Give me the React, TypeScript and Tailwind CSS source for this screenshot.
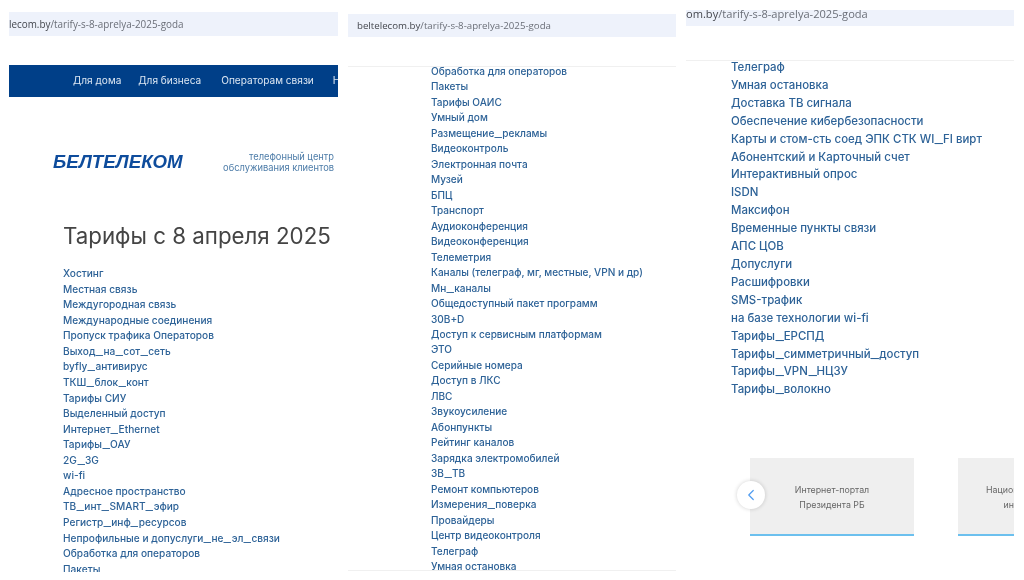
import React from 'react';
import { ChevronLeft } from 'lucide-react';

const firstList = [
  'Хостинг', 'Местная связь', 'Междугородная связь', 'Международные соединения', 'Пропуск трафика Операторов',
  'Выход_на_сот_сеть', 'byfly_антивирус', 'ТКШ_блок_конт', 'Тарифы СИУ', 'Выделенный доступ', 'Интернет_Ethernet',
  'Тарифы_ОАУ', '2G_3G', 'wi-fi', 'Адресное пространство', 'ТВ_инт_SMART_эфир', 'Регистр_инф_ресурсов',
  'Непрофильные и допуслуги_не_эл_связи', 'Обработка для операторов', 'Пакеты',
];

const secondList = [
  'Обработка для операторов', 'Пакеты', 'Тарифы ОАИС', 'Умный дом', 'Размещение_рекламы', 'Видеоконтроль',
  'Электронная почта', 'Музей', 'БПЦ', 'Транспорт', 'Аудиоконференция', 'Видеоконференция', 'Телеметрия',
  'Каналы (телеграф, мг, местные, VPN и др)', 'Мн_каналы', 'Общедоступный пакет программ', '30В+D',
  'Доступ к сервисным платформам', 'ЭТО', 'Серийные номера', 'Доступ в ЛКС', 'ЛВС', 'Звукоусиление', 'Абонпункты',
  'Рейтинг каналов', 'Зарядка электромобилей', 'ЗВ_ТВ', 'Ремонт компьютеров', 'Измерения_поверка', 'Провайдеры',
  'Центр видеоконтроля', 'Телеграф', 'Умная остановка',
];

const thirdList = [
  'Телеграф', 'Умная остановка', 'Доставка ТВ сигнала', 'Обеспечение кибербезопасности',
  'Карты и стом-сть соед ЭПК СТК WI_FI вирт', 'Абонентский и Карточный счет', 'Интерактивный опрос', 'ISDN',
  'Максифон', 'Временные пункты связи', 'АПС ЦОВ', 'Допуслуги', 'Расшифровки', 'SMS-трафик',
  'на базе технологии wi-fi', 'Тарифы_ЕРСПД', 'Тарифы_симметричный_доступ', 'Тарифы_VPN_НЦЗУ', 'Тарифы_волокно',
];

// underscores are wider in the site's font than in Inter
const ListItem = ({ text }: { text: string }) => {
  const parts = text.split('_');
  return (
    <li className="whitespace-nowrap">
      {parts.map((part, i) => (
        <React.Fragment key={i}>
          {i > 0 && <span className="mx-[1.7px] inline-block scale-x-[1.6]">_</span>}
          {part}
        </React.Fragment>
      ))}
    </li>
  );
};

const App: React.FC = () => {
  return (
    <div className="flex h-[580px] w-[1024px] overflow-hidden bg-white pl-[9px] font-['Inter',sans-serif] blur-[0.35px]">
      {/* left shot */}
      <div className="mr-[10px] h-[572px] w-[329px] shrink-0 overflow-hidden">
        <div className="mt-[12px] h-[24px] overflow-hidden whitespace-nowrap bg-[#eef2fb] font-['Open_Sans',sans-serif] text-[9.9px] leading-[24px] text-[#6b6f78]">
          <span className="text-[#44474e]">lecom.by</span>/tarify-s-8-aprelya-2025-goda
        </div>
        <div className="mt-[29px] flex h-[32px] items-center gap-[17px] overflow-hidden whitespace-nowrap bg-[#003f88] pl-[64px] text-[10.1px] text-[#dbe6f2]">
          <span>Для дома</span>
          <span>Для бизнеса</span>
          <span className="ml-[3px]">Операторам связи</span>
          <span className="ml-[2px]">Новости</span>
        </div>
        <div className="mt-[55px] flex h-[20px] items-center justify-between pl-[44px] pr-[4px]">
          <span className="font-['Liberation_Sans',sans-serif] text-[18.7px] font-bold italic text-[#0e4c9c]">БЕЛТЕЛЕКОМ</span>
          <span className="text-right text-[9.3px] leading-[11px] text-[#4d7ca8]">
            телефонный центр
            <br />
            обслуживания клиентов
          </span>
        </div>
        <h1 className="mt-[49px] whitespace-nowrap pl-[54px] text-[22.3px] leading-[30px] font-normal text-[#444]">Тарифы с 8 апреля 2025</h1>
        <ul className="mt-[15px] pl-[54px] text-[10.15px] leading-[15.56px] font-medium text-[#2d6297]">
          {firstList.map((item) => (
            <ListItem key={item} text={item} />
          ))}
        </ul>
      </div>

      {/* middle shot */}
      <div className="mr-[10px] h-[572px] w-[328px] shrink-0 overflow-hidden">
        <div className="mt-[14px] h-[23px] whitespace-nowrap bg-[#eef2fb] pl-[9px] font-['Open_Sans',sans-serif] text-[9.7px] leading-[24px] text-[#6b6f78]">
          <span className="text-[#44474e]">beltelecom.by</span>/tarify-s-8-aprelya-2025-goda
        </div>
        <div className="mt-[29px] border-t border-[#f0f0f0]">
          <ul className="-mt-[3px] pl-[83px] text-[10.05px] leading-[15.47px] font-medium text-[#2d6297]">
            {secondList.map((item) => (
              <ListItem key={item} text={item} />
            ))}
          </ul>
        </div>
        <div className="-mt-[4px] border-t border-[#f0f0f0]" />
      </div>

      {/* right shot */}
      <div className="h-[572px] w-[328px] shrink-0 overflow-hidden">
        <div className="mt-[10px] h-[16px] whitespace-nowrap bg-[#eef2fb] font-['Open_Sans',sans-serif] text-[11.1px] leading-[7px] text-[#6b6f78]">
          <span className="text-[#44474e]">om.by</span>/tarify-s-8-aprelya-2025-goda
        </div>
        <div className="mt-[34px] border-t border-[#f0f0f0]">
          <ul className="-mt-[2px] pl-[45px] text-[11.45px] leading-[17.9px] font-medium text-[#2d6297]">
            {thirdList.map((item) => (
              <ListItem key={item} text={item} />
            ))}
          </ul>
        </div>
        <div className="relative mt-[59px] flex gap-[44px] pl-[64px]">
          <div className="flex h-[78px] w-[164px] shrink-0 flex-col items-center justify-center border-b-2 border-[#6cc0ee] bg-[#efefef] pt-[1px] text-center text-[8.8px] leading-[15px] text-[#666]">
            <span>Интернет-портал</span>
            <span>Президента РБ</span>
          </div>
          <div className="flex h-[78px] w-[164px] shrink-0 flex-col items-center justify-center border-b-2 border-[#6cc0ee] bg-[#efefef] pt-[1px] text-center text-[8.8px] leading-[15px] text-[#666]">
            <span className="whitespace-nowrap">Национальный правовой</span>
            <span>интернет-портал</span>
          </div>
          <div className="absolute left-[51px] top-[23px] flex h-[28px] w-[28px] items-center justify-center rounded-full bg-white shadow-[0_0_4px_rgba(0,0,0,0.18)]">
            <ChevronLeft size={18} strokeWidth={1.6} className="text-[#4f9cf0]" />
          </div>
        </div>
      </div>
    </div>
  );
};

export default App;
